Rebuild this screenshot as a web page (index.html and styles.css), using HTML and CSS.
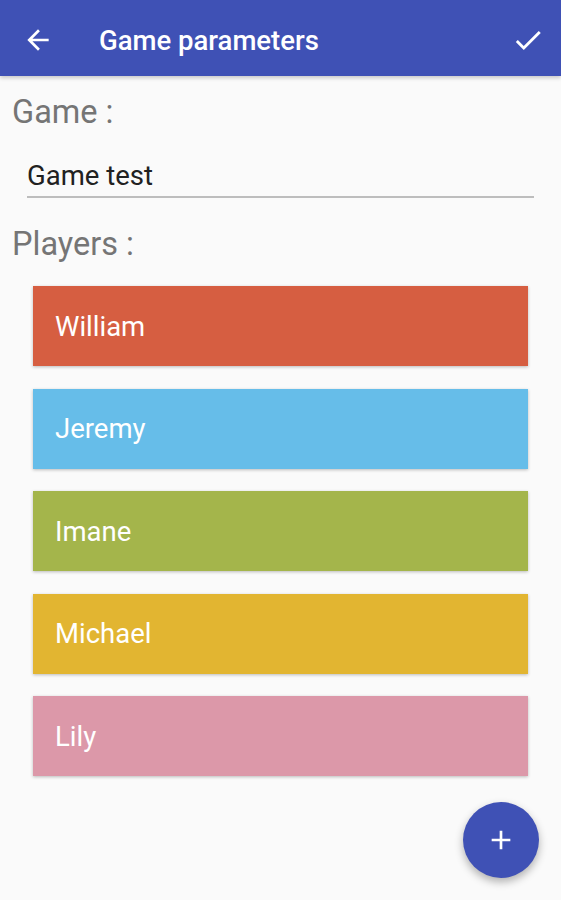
FILE: index.html
```html
<!DOCTYPE html>
<html lang="en">
<head>
  <meta charset="UTF-8">
  <meta name="viewport" content="width=device-width, initial-scale=1.0">
  <title>Game parameters</title>
  <link rel="stylesheet" href="styles.css">
</head>
<body>
  <header class="app-bar">
    <button class="icon-btn back-btn" aria-label="Back">
      <svg width="32" height="32" viewBox="0 0 24 24"><path fill="#fff" d="M20 11H7.83l5.59-5.59L12 4l-8 8 8 8 1.41-1.41L7.83 13H20v-2z"/></svg>
    </button>
    <h1 class="title">Game parameters</h1>
    <button class="icon-btn check-btn" aria-label="Save">
      <svg width="34" height="34" viewBox="0 0 24 24"><path fill="#fff" d="M9 16.17L4.83 12l-1.42 1.41L9 19 21 7l-1.41-1.41z"/></svg>
    </button>
  </header>

  <main class="content">
    <h2 class="section-label">Game :</h2>
    <div class="field">
      <input type="text" id="gameName" value="Game test">
    </div>

    <h2 class="section-label">Players :</h2>
    <ul class="players" id="players"></ul>
  </main>

  <button class="fab" id="addBtn" aria-label="Add player">
    <svg width="32" height="32" viewBox="0 0 24 24"><path fill="#fff" d="M19 13h-6v6h-2v-6H5v-2h6V5h2v6h6v2z"/></svg>
  </button>

  <script>
    const players = [
      { name: 'William', color: '#d65e41' },
      { name: 'Jeremy', color: '#66bde9' },
      { name: 'Imane', color: '#a4b54b' },
      { name: 'Michael', color: '#e2b531' },
      { name: 'Lily', color: '#dc98a9' }
    ];

    const list = document.getElementById('players');

    const render = () => {
      list.innerHTML = '';
      players.forEach(player => {
        const li = document.createElement('li');
        li.className = 'player';
        li.style.backgroundColor = player.color;
        li.innerText = player.name;
        list.appendChild(li);
      });
    };

    render();
  </script>
</body>
</html>
```

FILE: styles.css
```css
* {
  margin: 0;
  padding: 0;
  box-sizing: border-box;
  font-family: 'Roboto', 'Liberation Sans', sans-serif;
}
body {
  width: 561px;
  height: 900px;
  background-color: #fafafa;
  position: relative;
  overflow: hidden;
}
.app-bar {
  height: 76px;
  background-color: #3f51b5;
  display: flex;
  align-items: center;
  padding: 4px 16px 0 22px;
  box-shadow: 0 2px 4px rgba(0, 0, 0, 0.2);
}
.icon-btn {
  background: none;
  border: none;
  display: flex;
  align-items: center;
  justify-content: center;
  cursor: pointer;
}
.title {
  flex: 1;
  margin-left: 45px;
  color: #fff;
  font-size: 27.5px;
  font-weight: 500;
}
.content {
  padding: 17px 27px 0 12px;
}
.section-label {
  color: #757575;
  font-size: 32.5px;
  font-weight: 400;
  line-height: 38px;
}
.field {
  margin: 20px 0 0 15px;
  border-bottom: 2px solid #bdbdbd;
}
.field input {
  width: 100%;
  border: none;
  background: none;
  outline: none;
  font-size: 27.5px;
  color: #212121;
  padding: 8px 0 4px 0;
}
.field + .section-label {
  margin-top: 27px;
}
.players {
  list-style: none;
  display: flex;
  flex-direction: column;
  gap: 22.5px;
  margin: 23px 6px 0 21px;
}
.player {
  height: 80px;
  display: flex;
  align-items: center;
  padding-left: 22px;
  color: #fff;
  font-size: 27.5px;
  box-shadow: 0 1px 3px rgba(0, 0, 0, 0.25);
}
.fab {
  position: absolute;
  left: 463px;
  top: 802px;
  width: 76px;
  height: 76px;
  border-radius: 50%;
  border: none;
  background-color: #3f51b5;
  display: flex;
  align-items: center;
  justify-content: center;
  box-shadow: 0 4px 8px rgba(0, 0, 0, 0.3);
  cursor: pointer;
}
```
